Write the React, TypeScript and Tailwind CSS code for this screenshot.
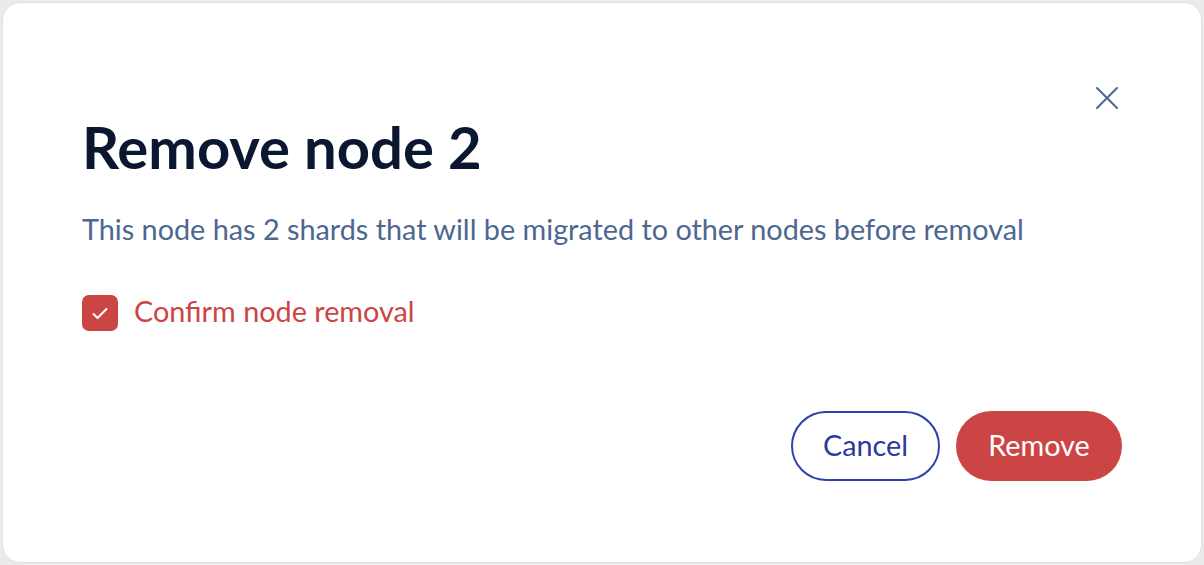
import React from "react";

export default function App() {
  return (
    <div className="w-[1204px] h-[565px] bg-[#ebebeb] p-[2px] font-['Lato',sans-serif]">
      <div className="w-full h-full bg-white rounded-[18px] border border-[#e0e0e0] flex flex-col pl-[79px] pr-[79px] pt-[81px]">
        <div className="flex justify-end">
          <button className="w-[28px] h-[28px] mr-[1px] flex items-center justify-center text-[#4d6790]">
            <svg width="24" height="24" viewBox="0 0 24 24" fill="none" stroke="currentColor" strokeWidth="2" strokeLinecap="round">
              <path d="M2 2L22 22M22 2L2 22" />
            </svg>
          </button>
        </div>
        <h1 className="text-[58px] leading-[70px] font-bold text-[#0b1630]">Remove node 2</h1>
        <p className="text-[28.8px] leading-[36px] text-[#4d6790] mt-[29px]">
          This node has 2 shards that will be migrated to other nodes before removal
        </p>
        <label className="flex items-center gap-[16px] mt-[48px] h-[36px]">
          <span className="w-[36px] h-[36px] rounded-[7px] bg-[#cc4545] flex items-center justify-center">
            <svg width="20" height="20" viewBox="0 0 20 20" fill="none" stroke="white" strokeWidth="2" strokeLinecap="round" strokeLinejoin="round">
              <path d="M3.5 11L7.5 15L16.5 6" />
            </svg>
          </span>
          <span className="text-[28.8px] leading-[34px] pb-[4px] text-[#cc4545]">Confirm node removal</span>
        </label>
        <div className="flex justify-end gap-[16px] mt-[80px]">
          <button className="w-[149px] h-[70px] rounded-full border-2 border-[#2f40aa] text-[#2c3aa0] text-[28.8px] bg-white flex items-center justify-center">Cancel</button>
          <button className="w-[166px] h-[70px] rounded-full bg-[#cc4545] text-white text-[28.8px] flex items-center justify-center">Remove</button>
        </div>
      </div>
    </div>
  );
}
